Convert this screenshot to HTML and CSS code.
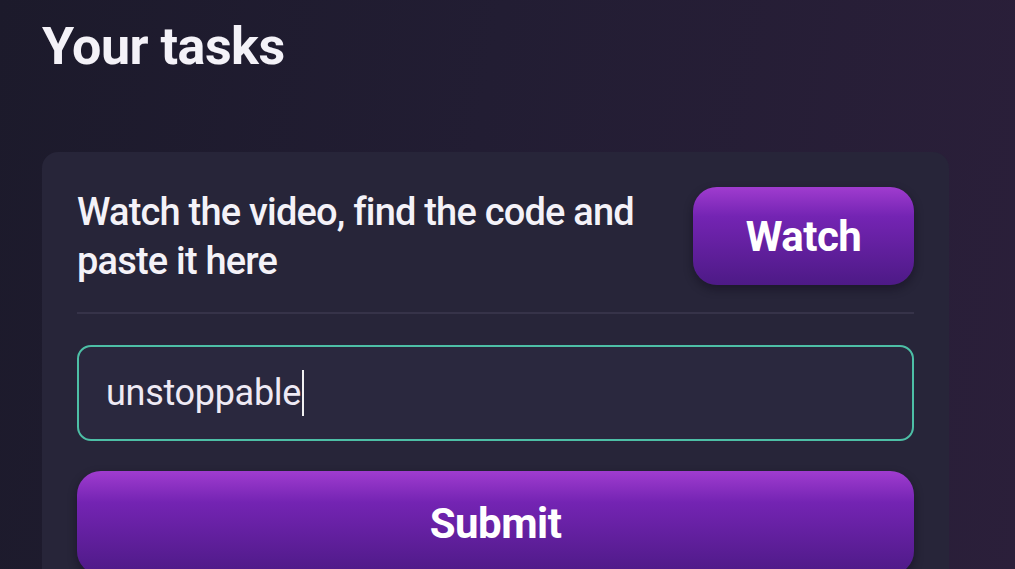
FILE: index.html
```html
<!DOCTYPE html>
<html lang="en">
<head>
  <meta charset="UTF-8">
  <meta name="viewport" content="width=device-width, initial-scale=1.0">
  <title>Your tasks</title>
  <link rel="stylesheet" href="styles.css">
</head>
<body>
  <h2 class="titulo">Your tasks</h2>

  <div class="card">
    <div class="tarefa">
      <p class="descricao">Watch the video, find the code and paste it here</p>
      <button class="botao watch">Watch</button>
    </div>

    <hr class="divisor">

    <div class="campo">
      <span class="valor">unstoppable</span><span class="cursor"></span>
    </div>

    <button class="botao submit">Submit</button>
  </div>
</body>
</html>
```

FILE: styles.css
```css
body {
  margin: 0;
  height: 569px;
  overflow: hidden;
  font-family: Roboto, "Noto Sans", sans-serif;
  background: linear-gradient(100deg, #1c1a2b 0%, #221d33 45%, #2b1f3a 100%);
  color: #f4f2f8;
  padding: 17px 66px 0 42px;
}
.titulo {
  margin: 0;
  font-size: 52px;
  font-weight: 700;
  line-height: 60px;
  letter-spacing: -0.5px;
}
.card {
  margin-top: 75px;
  background: #272539;
  border-radius: 16px;
  padding: 35px 35px 40px 35px;
}
.tarefa {
  display: flex;
  align-items: flex-start;
  gap: 34px;
}
.descricao {
  flex: 1;
  margin: 1px 0 0 0;
  font-size: 38px;
  font-weight: 500;
  line-height: 49px;
  letter-spacing: -0.8px;
}
.botao {
  border: none;
  color: #ffffff;
  font-family: Roboto, "Noto Sans", sans-serif;
  font-weight: 700;
  background: linear-gradient(180deg, #a03ccf 0%, #7424b3 30%, #4d1a86 100%);
  border-radius: 24px;
  cursor: pointer;
  box-shadow: 0 4px 10px rgba(10, 6, 20, 0.4);
}
.watch {
  width: 221px;
  height: 98px;
  font-size: 42px;
  letter-spacing: -0.5px;
}
.divisor {
  border: none;
  height: 2px;
  background: #363349;
  margin: 26px 0 31px 0;
}
.campo {
  height: 92px;
  border: 2px solid #4dbfa6;
  border-radius: 14px;
  background: #2a283e;
  display: flex;
  align-items: center;
  padding-left: 27px;
}
.valor {
  font-size: 36px;
  letter-spacing: -0.3px;
  color: #eeeaf4;
}
.cursor {
  width: 2px;
  height: 46px;
  background: #f0f0f0;
  margin-left: 1px;
}
.submit {
  display: block;
  width: 100%;
  height: 104px;
  margin-top: 30px;
  font-size: 42px;
  letter-spacing: -0.5px;
}
```
